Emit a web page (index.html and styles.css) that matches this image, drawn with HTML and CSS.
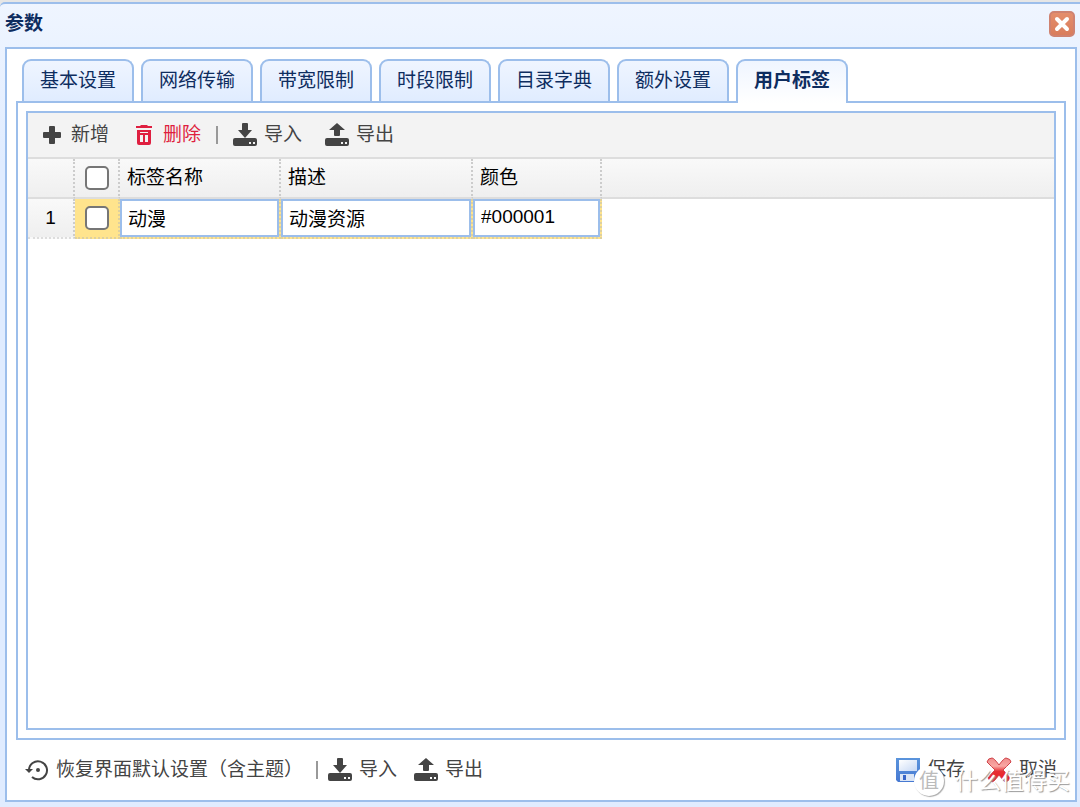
FILE: index.html
```html
<!DOCTYPE html>
<html lang="zh-CN">
<head>
<meta charset="utf-8">
<title>参数</title>
<link rel="stylesheet" href="styles.css">
</head>
<body>
<svg class="sprite" aria-hidden="true">
  <symbol id="drive" viewBox="0 0 24 8"><path fill-rule="evenodd" d="M2 0H22Q24 0 24 2V6Q24 8 22 8H2Q0 8 0 6V2Q0 0 2 0ZM16 4V6H18V4ZM20 4V6H22V4Z"/></symbol>
  <symbol id="import" viewBox="0 0 24 24"><path d="M10 0H14Q15 0 15 1V7H19L12 15L5 7H9V1Q9 0 10 0Z"/><use href="#drive" x="0" y="15" width="24" height="8"/></symbol>
  <symbol id="export" viewBox="0 0 24 24"><path d="M12 0L20 7H15V12Q15 13 14 13H10Q9 13 9 12V7H4Z"/><use href="#drive" x="0" y="15" width="24" height="8"/></symbol>
</svg>
<main class="dialog">
  <header class="title-bar">
    <h1 class="title">参数</h1>
    <button class="close" type="button" aria-label="关闭"><svg viewBox="0 0 22 22"><path d="M6 6L16 16M16 6L6 16" fill="none" stroke="#fff" stroke-width="4" stroke-linecap="round"/></svg></button>
  </header>
  <div class="body">
    <nav class="tabs">
      <button class="tab" type="button">基本设置</button>
      <button class="tab" type="button">网络传输</button>
      <button class="tab" type="button">带宽限制</button>
      <button class="tab" type="button">时段限制</button>
      <button class="tab" type="button">目录字典</button>
      <button class="tab" type="button">额外设置</button>
      <button class="tab selected" type="button">用户标签</button>
    </nav>
    <section class="tab-panel">
      <div class="grid">
        <div class="toolbar">
          <button class="tool add" type="button"><svg class="small" viewBox="0 0 18 18"><path d="M7 0H11Q12 0 12 1V6H17Q18 6 18 7V11Q18 12 17 12H12V17Q12 18 11 18H7Q6 18 6 17V12H1Q0 12 0 11V7Q0 6 1 6H6V1Q6 0 7 0Z"/></svg>新增</button>
          <button class="tool danger" type="button"><svg class="small trash" viewBox="0 0 18 20"><path fill-rule="evenodd" d="M1 1H5L6 0H12L13 1H17V3H1ZM2 5H16V18Q16 20 14 20H4Q2 20 2 18ZM5 10V17H8V10ZM10 10V17H13V10ZM5 7V8H13V7Z"/></svg>删除</button>
          <span class="divider"></span>
          <button class="tool" type="button"><svg viewBox="0 0 24 24"><use href="#import"/></svg>导入</button>
          <button class="tool spaced" type="button"><svg viewBox="0 0 24 24"><use href="#export"/></svg>导出</button>
        </div>
        <table class="table">
          <colgroup><col class="col-num"><col class="col-check"><col class="col-name"><col class="col-desc"><col class="col-color"><col></colgroup>
          <thead>
            <tr><th></th><th class="check"><input type="checkbox" aria-label="全选"></th><th>标签名称</th><th>描述</th><th>颜色</th><th class="rest"></th></tr>
          </thead>
          <tbody>
            <tr><td class="num">1</td><td class="check edit"><input type="checkbox" aria-label="选择第1行"></td><td class="edit"><input class="field" type="text" aria-label="标签名称" value="动漫"></td><td class="edit"><input class="field" type="text" aria-label="描述" value="动漫资源"></td><td class="edit"><input class="field" type="text" aria-label="颜色" value="#000001"></td><td class="rest"></td></tr>
          </tbody>
        </table>
      </div>
    </section>
    <footer class="footer">
      <button class="tool" type="button"><svg viewBox="0 0 24 24"><path d="M4 12A9 9 0 1 1 7 19" fill="none" stroke="currentColor" stroke-width="2"/><path d="M0 11H8L4 15Z"/><circle cx="13" cy="12" r="2"/></svg>恢复界面默认设置（含主题）</button>
      <span class="divider"></span>
      <button class="tool" type="button"><svg viewBox="0 0 24 24"><use href="#import"/></svg>导入</button>
      <button class="tool spaced" type="button"><svg viewBox="0 0 24 24"><use href="#export"/></svg>导出</button>
      <div class="actions">
        <button class="tool" type="button"><svg viewBox="0 0 24 24"><defs><linearGradient id="disk" x2="0" y2="1"><stop stop-color="#5a94dc"/><stop offset="1" stop-color="#4679d2"/></linearGradient><linearGradient id="label" x2="1" y2="1"><stop stop-color="#fff"/><stop offset="1" stop-color="#c6d8f5"/></linearGradient></defs><path d="M0 0H24V24H2L0 22Z" fill="url(#disk)"/><path d="M3 2H21V13H3Z" fill="url(#label)"/><path d="M4 16H18V23H4Z" fill="#dbe5f5"/><path d="M7 17H10V22H7Z" fill="#3865c8"/></svg>保存</button>
        <button class="tool cancel" type="button"><svg class="cross" viewBox="0 0 26 26"><defs><linearGradient id="red" gradientUnits="userSpaceOnUse" x1="0" y1="0" x2="0" y2="26"><stop stop-color="#e88"/><stop offset=".35" stop-color="#f9a8a4"/><stop offset=".55" stop-color="#e63035"/><stop offset="1" stop-color="#f01a1e"/></linearGradient></defs><path d="M6 1Q8 1 13 8Q18 1 20 1Q25 2 25 5Q20 10 17 13Q21 17 24 21Q22 25 19 25Q16 22 13 18Q10 22 7 25Q4 25 2 21Q5 17 9 13Q6 10 1 5Q2 1 6 1Z" fill="url(#red)" stroke="#cf4248" stroke-width="1"/></svg>取消</button>
      </div>
    </footer>
  </div>
  <div class="watermark"><span class="seal">值</span><span>什么值得买</span></div>
</main>
</body>
</html>
```
FILE: styles.css
```css
* { box-sizing: border-box; }
body {
  margin: 0;
  padding-top: 2px;
  min-height: 100vh;
  display: flex;
  background: #e6e6e6;
  color: #000;
  font: 19px/24px "Liberation Sans", "Noto Sans CJK SC", sans-serif;
}
button, input { font: inherit; }
button { cursor: pointer; }
.sprite { position: absolute; width: 0; height: 0; }
.dialog {
  position: relative;
  flex: 1;
  display: flex;
  flex-direction: column;
  padding: 0 3px 5px 5px;
  border-top: 2px solid #9cbeeb;
  border-top-left-radius: 5px;
  background: linear-gradient(#eff5ff, #e0ecff 160px);
}
.title-bar {
  height: 43px;
  display: flex;
  align-items: center;
  justify-content: space-between;
  padding-bottom: 3px;
}
.title { margin: 0; font-size: 19px; line-height: 24px; color: #0e2d5f; }
.close {
  width: 26px;
  height: 26px;
  padding: 0;
  margin-right: 2px;
  border: 2px solid #cf8270;
  border-radius: 5px;
  background: linear-gradient(#e48e6c, #d97d5c);
}
.close svg { display: block; width: 22px; height: 22px; }
.body {
  flex: 1;
  display: flex;
  flex-direction: column;
  padding: 10px 9px 0;
  border: 2px solid #9cbeeb;
  background: #fff;
}
.tabs { display: flex; gap: 7px; padding-left: 6px; }
.tab {
  width: 112px;
  height: 42px;
  padding: 0;
  border: 2px solid #9cbeeb;
  border-bottom: 0;
  border-radius: 9px 9px 0 0;
  background: linear-gradient(#eff5ff, #e0ecff);
  color: #0e2d5f;
}
.tab.selected {
  z-index: 1;
  height: 44px;
  margin-bottom: -2px;
  padding-bottom: 2px;
  background: linear-gradient(#eff5ff, #fff);
  font-weight: bold;
}
.tab-panel {
  flex: 1;
  display: flex;
  padding: 8px;
  border: 2px solid #9cbeeb;
}
.grid { flex: 1; border: 2px solid #9cbeeb; }
.toolbar {
  height: 46px;
  display: flex;
  align-items: center;
  padding-left: 15px;
  border-bottom: 2px solid #ddd;
  background: #f3f3f3;
}
.tool {
  display: flex;
  align-items: center;
  gap: 7px;
  padding: 0;
  border: 0;
  background: none;
  color: #444;
  white-space: nowrap;
}
.tool svg { width: 24px; height: 24px; fill: currentColor; }
.tool .small { width: 18px; height: 18px; }
.tool .trash { height: 20px; }
.add, .danger { gap: 10px; }
.danger { margin-left: 26px; color: #df1f40; }
.spaced { margin-left: 23px; }
.divider { width: 2px; height: 18px; margin: 0 15px; background: #999; }
.table { width: 100%; table-layout: fixed; border-spacing: 0; text-align: left; }
.col-num { width: 47px; }
.col-check { width: 45px; }
.col-name { width: 161px; }
.col-desc { width: 192px; }
.col-color { width: 129px; }
.table th {
  height: 40px;
  padding: 0 7px;
  border-right: 2px dotted #ccc;
  border-bottom: 2px solid #ddd;
  background: linear-gradient(#f9f9f9, #efefef);
  font-weight: normal;
}
.table td { height: 40px; padding: 0; border-right: 2px dotted #ccc; border-bottom: 2px dotted #ddd; }
.table .rest { border-right: 0; }
.table td.rest { border-bottom: 0; }
.table .num { background: linear-gradient(#f9f9f9, #efefef); text-align: center; }
.table .edit { border-color: #ddd0a0; background: #ffe48d; }
.table .check { padding: 0; text-align: center; }
.check input {
  display: block;
  width: 24px;
  height: 24px;
  margin: 0 auto;
  appearance: none;
  border: 2px solid #767676;
  border-radius: 5px;
  background: #fff;
}
.field {
  display: block;
  width: 100%;
  height: 38px;
  padding: 0 6px 2px;
  border: 2px solid #9cbeeb;
  border-radius: 0;
  background: #fff;
  color: #000;
}
.footer { height: 60px; display: flex; align-items: center; padding-left: 9px; }
.footer .divider { margin: 0 10px 0 13px; }
.footer .spaced { margin-left: 17px; }
.actions { display: flex; gap: 21px; margin-left: auto; padding-right: 9px; }
.tool .cross { width: 26px; height: 26px; }
.watermark {
  position: absolute;
  right: 10px;
  bottom: 11px;
  display: flex;
  align-items: center;
  gap: 11px;
  color: #fff;
  font-size: 23px;
  line-height: 30px;
  text-shadow: 1px 1px 1px #999;
  pointer-events: none;
}
.seal {
  width: 30px;
  height: 30px;
  border-radius: 50%;
  background: #fff;
  box-shadow: 1px 1px 1px #aaa;
  color: #bbb;
  font-size: 20px;
  text-align: center;
  text-shadow: none;
}
```
